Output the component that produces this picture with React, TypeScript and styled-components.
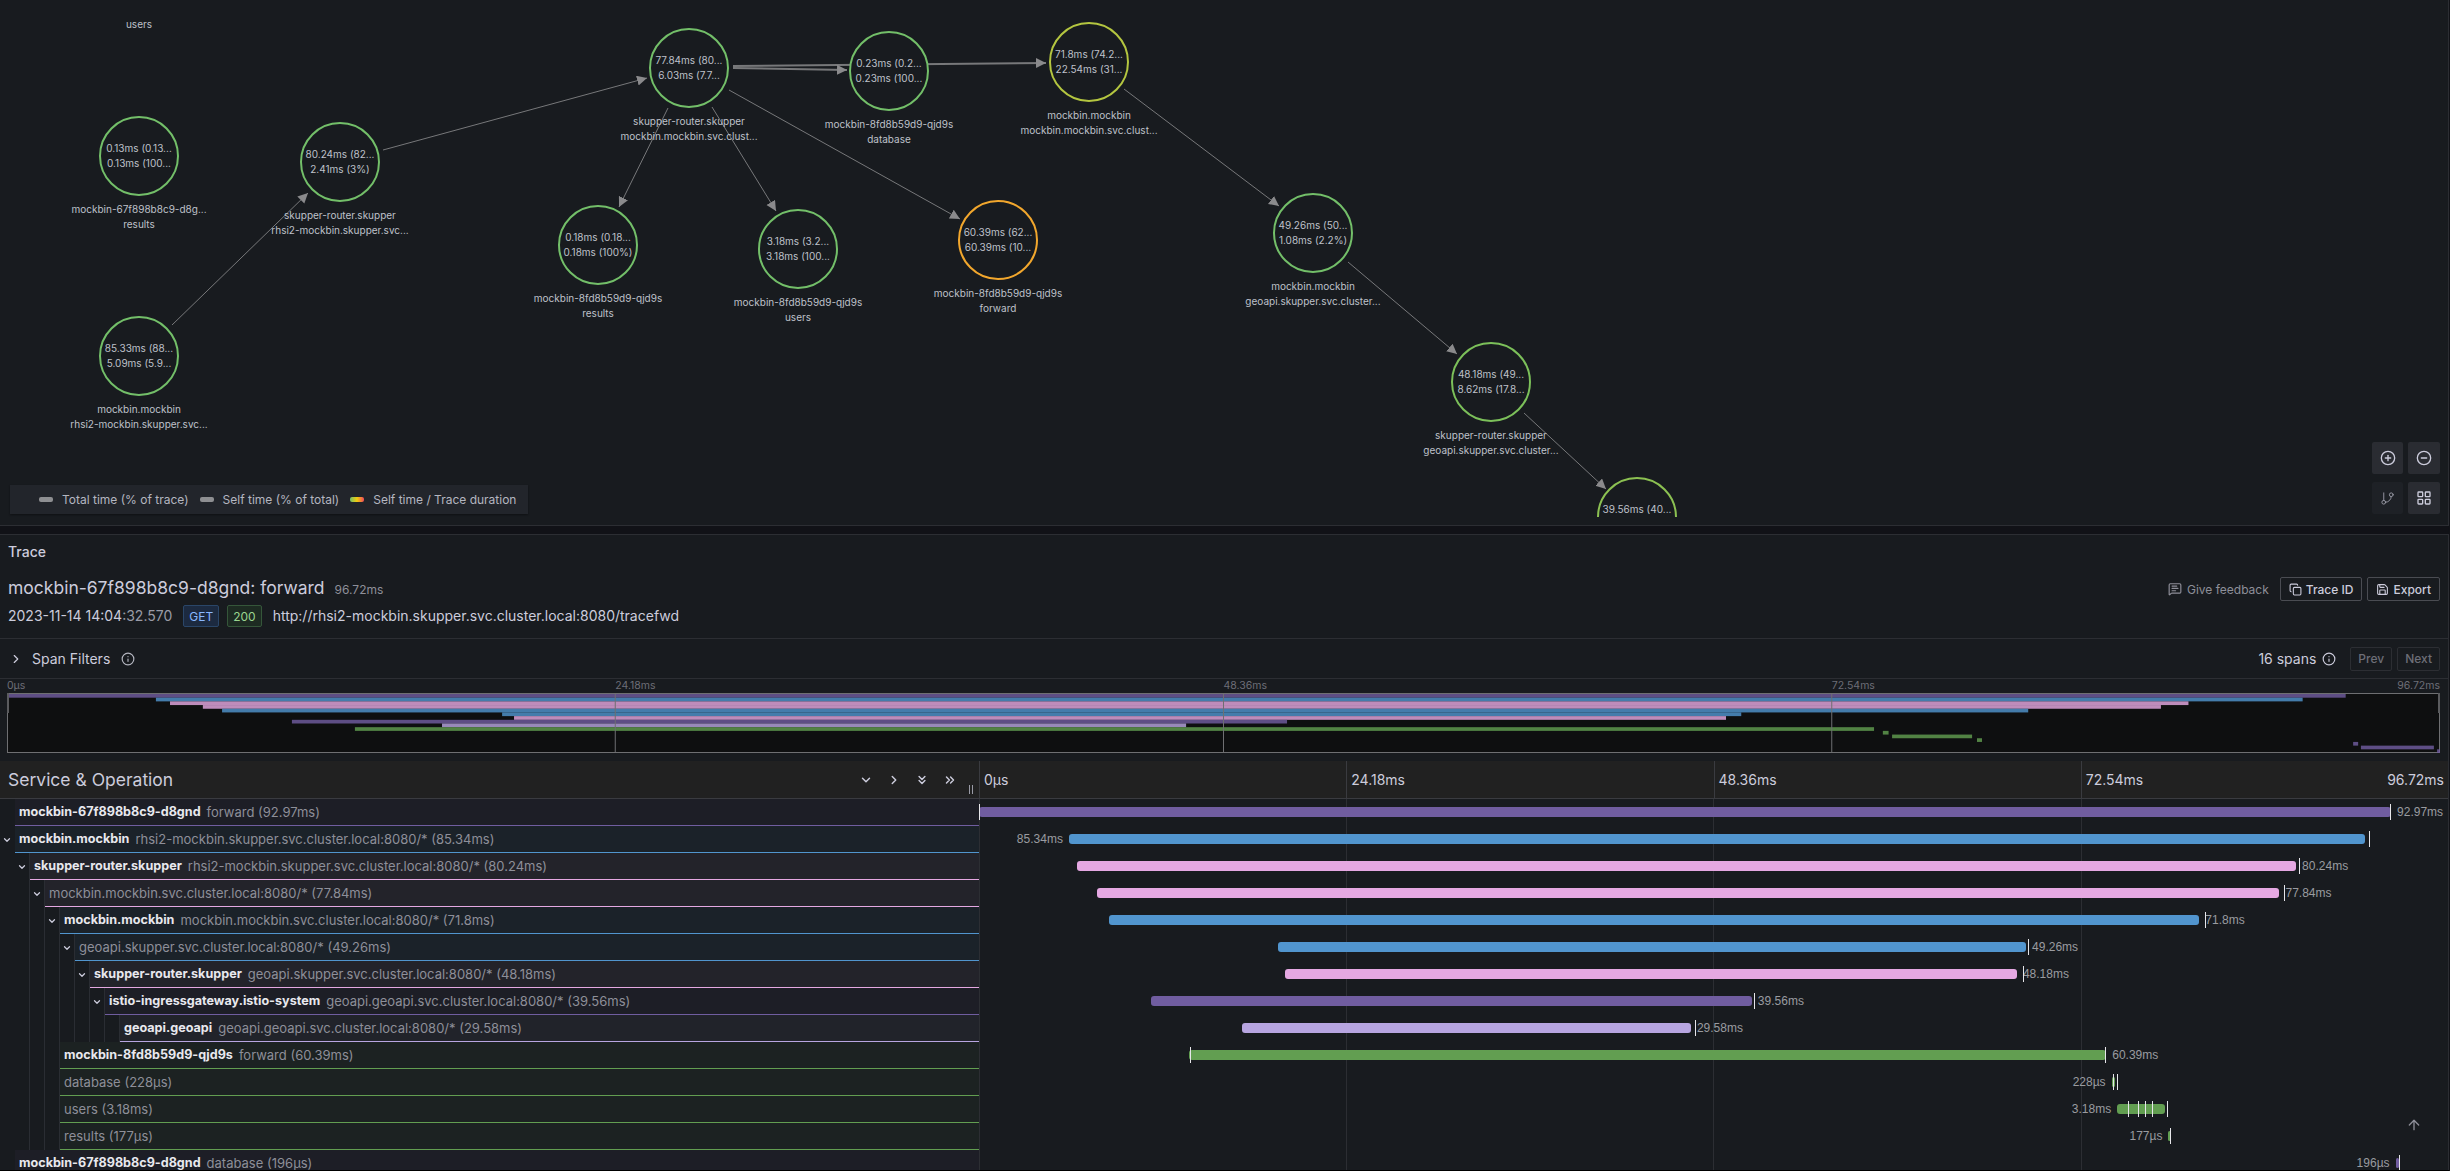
import styled, { createGlobalStyle } from 'styled-components';
import {
  ArrowUp,
  ChevronDown,
  ChevronRight,
  ChevronsDown,
  ChevronsRight,
  CircleMinus,
  CirclePlus,
  Copy,
  GitBranch,
  Info,
  LayoutGrid,
  MessageSquareText,
  Save,
} from 'lucide-react';

const PURPLE = '#705da0';
const BLUE = '#5195ce';
const PINK = '#e5a8e2';
const LILAC = '#b7a5e0';
const GREEN = '#629e51';
const TOTAL_MS = 96.72;

type GraphNode = { cx: number; cy: number; stats: string[]; label: string[]; color?: string };

const nodes: GraphNode[] = [
  { cx: 139, cy: -59, stats: [], label: ['geoapi.mockbin.svc.clust...', '\u00a0', 'users'] },
  { cx: 139, cy: 156, stats: ['0.13ms (0.13...', '0.13ms (100...'], label: ['mockbin-67f898b8c9-d8g...', 'results'] },
  { cx: 139, cy: 356, stats: ['85.33ms (88...', '5.09ms (5.9...'], label: ['mockbin.mockbin', 'rhsi2-mockbin.skupper.svc...'] },
  { cx: 340, cy: 162, stats: ['80.24ms (82...', '2.41ms (3%)'], label: ['skupper-router.skupper', 'rhsi2-mockbin.skupper.svc...'] },
  { cx: 689, cy: 68, stats: ['77.84ms (80...', '6.03ms (7.7...'], label: ['skupper-router.skupper', 'mockbin.mockbin.svc.clust...'] },
  { cx: 598, cy: 245, stats: ['0.18ms (0.18...', '0.18ms (100%)'], label: ['mockbin-8fd8b59d9-qjd9s', 'results'] },
  { cx: 798, cy: 249, stats: ['3.18ms (3.2...', '3.18ms (100...'], label: ['mockbin-8fd8b59d9-qjd9s', 'users'] },
  { cx: 889, cy: 71, stats: ['0.23ms (0.2...', '0.23ms (100...'], label: ['mockbin-8fd8b59d9-qjd9s', 'database'] },
  { cx: 1089, cy: 62, stats: ['71.8ms (74.2...', '22.54ms (31...'], label: ['mockbin.mockbin', 'mockbin.mockbin.svc.clust...'], color: '#b4c640' },
  { cx: 998, cy: 240, stats: ['60.39ms (62...', '60.39ms (10...'], label: ['mockbin-8fd8b59d9-qjd9s', 'forward'], color: '#f2a72d' },
  { cx: 1313, cy: 233, stats: ['49.26ms (50...', '1.08ms (2.2%)'], label: ['mockbin.mockbin', 'geoapi.skupper.svc.cluster...'] },
  { cx: 1491, cy: 382, stats: ['48.18ms (49...', '8.62ms (17.8...'], label: ['skupper-router.skupper', 'geoapi.skupper.svc.cluster...'], color: '#7cc05a' },
  { cx: 1637, cy: 517, stats: ['39.56ms (40...', '9.98ms (25.2...'], label: ['istio-ingressgateway.istio...', 'geoapi.geoapi.svc.cluster...'], color: '#8cc152' },
];

const edges = [
  { d: [172, 325, 308, 193], w: 1 },
  { d: [383, 150, 647, 78], w: 1 },
  { d: [668, 108, 619, 207], w: 1 },
  { d: [712, 107, 776, 211], w: 1 },
  { d: [729, 90, 960, 219], w: 1 },
  { d: [733, 66, 1046, 63], w: 2 },
  { d: [733, 68, 847, 70], w: 2 },
  { d: [1124, 89, 1279, 206], w: 1 },
  { d: [1348, 262, 1457, 354], w: 1 },
  { d: [1524, 413, 1606, 489], w: 1 },
];

type Span = {
  service?: string;
  op: string;
  dur: string;
  ms: number;
  start: number;
  color: string;
  depth: number;
  parent?: boolean;
  side: 'left' | 'right';
  marks: number[];
};

const spans: Span[] = [
  { service: 'mockbin-67f898b8c9-d8gnd', op: 'forward', dur: '92.97ms', ms: 92.97, start: 0, color: PURPLE, depth: 1, side: 'right', marks: [0, 1411] },
  { service: 'mockbin.mockbin', op: 'rhsi2-mockbin.skupper.svc.cluster.local:8080/*', dur: '85.34ms', ms: 85.34, start: 6.12, color: BLUE, depth: 1, parent: true, side: 'left', marks: [1390] },
  { service: 'skupper-router.skupper', op: 'rhsi2-mockbin.skupper.svc.cluster.local:8080/*', dur: '80.24ms', ms: 80.24, start: 6.7, color: PINK, depth: 2, parent: true, side: 'right', marks: [1320] },
  { op: 'mockbin.mockbin.svc.cluster.local:8080/*', dur: '77.84ms', ms: 77.84, start: 8.05, color: PINK, depth: 3, parent: true, side: 'right', marks: [1304.5] },
  { service: 'mockbin.mockbin', op: 'mockbin.mockbin.svc.cluster.local:8080/*', dur: '71.8ms', ms: 71.8, start: 8.84, color: BLUE, depth: 4, parent: true, side: 'right', marks: [1225.5] },
  { op: 'geoapi.skupper.svc.cluster.local:8080/*', dur: '49.26ms', ms: 49.26, start: 20.35, color: BLUE, depth: 5, parent: true, side: 'right', marks: [1049] },
  { service: 'skupper-router.skupper', op: 'geoapi.skupper.svc.cluster.local:8080/*', dur: '48.18ms', ms: 48.18, start: 20.84, color: PINK, depth: 6, parent: true, side: 'right', marks: [1043.5] },
  { service: 'istio-ingressgateway.istio-system', op: 'geoapi.geoapi.svc.cluster.local:8080/*', dur: '39.56ms', ms: 39.56, start: 11.71, color: PURPLE, depth: 7, parent: true, side: 'right', marks: [775] },
  { service: 'geoapi.geoapi', op: 'geoapi.geoapi.svc.cluster.local:8080/*', dur: '29.58ms', ms: 29.58, start: 17.88, color: LILAC, depth: 8, side: 'right', marks: [716] },
  { service: 'mockbin-8fd8b59d9-qjd9s', op: 'forward', dur: '60.39ms', ms: 60.39, start: 14.3, color: GREEN, depth: 4, side: 'right', marks: [211, 1125.5] },
  { op: 'database', dur: '228µs', ms: 0.228, start: 77.1, color: GREEN, depth: 4, side: 'left', marks: [1134, 1138] },
  { op: 'users', dur: '3.18ms', ms: 3.18, start: 77.48, color: GREEN, depth: 4, side: 'left', marks: [1149.4, 1159, 1166, 1172.6, 1187.7] },
  { op: 'results', dur: '177µs', ms: 0.177, start: 80.97, color: GREEN, depth: 4, side: 'left', marks: [1190.5] },
  { service: 'mockbin-67f898b8c9-d8gnd', op: 'database', dur: '196µs', ms: 0.196, start: 96.43, color: PURPLE, depth: 1, side: 'left', marks: [1419.6] },
  { service: 'mockbin-67f898b8c9-d8gnd', op: 'users', dur: '2.9ms', ms: 2.9, start: 96.75, color: PURPLE, depth: 1, side: 'left', marks: [] },
  { service: 'mockbin-67f898b8c9-d8gnd', op: 'results', dur: '130µs', ms: 0.13, start: 99.88, color: PURPLE, depth: 1, side: 'left', marks: [] },
];

const GlobalStyle = createGlobalStyle`
  html, body {
    margin: 0;
    background: #111217;
    overflow: hidden;
  }
  body {
    font-family: Inter, "Noto Sans", sans-serif;
    color: #ccccdc;
  }
  * {
    box-sizing: border-box;
  }
`;

const Page = styled.div`
  width: 2450px;
  height: 1171px;
  padding-right: 1px;
  overflow: hidden;
  display: flex;
  flex-direction: column;
`;

const GraphPanel = styled.section`
  position: relative;
  flex: none;
  height: 526px;
  background: #181b1f;
  border-right: 1px solid #2c2e33;
  border-bottom: 1px solid #2c2e33;
`;

const GraphCanvas = styled.div`
  position: relative;
  height: 517px;
  overflow: hidden;
`;

const EdgeLayer = styled.svg`
  position: absolute;
  inset: 0;
  width: 100%;
  height: 100%;
`;

const NodeBox = styled.div`
  position: absolute;
  width: 200px;
  display: flex;
  flex-direction: column;
  align-items: center;
  font-size: 10px;
  line-height: 15px;
  color: #bfc1ca;
  white-space: nowrap;
`;

const Ring = styled.div<{ $color: string }>`
  width: 80px;
  height: 80px;
  flex: none;
  display: flex;
  flex-direction: column;
  align-items: center;
  justify-content: center;
  border-radius: 50%;
  border: 2px solid ${(p) => p.$color};
  background: #181b1f;
`;

const NodeLabel = styled.div`
  margin-top: 6px;
  text-align: center;
`;

const Legend = styled.div`
  position: absolute;
  left: 10px;
  top: 485px;
  width: 518px;
  height: 29px;
  padding-left: 29px;
  background: #22252b;
  display: flex;
  align-items: center;
  gap: 11px;
  font-size: 12px;
  color: #b4b6c0;
  box-shadow: 0 1px 2px rgba(0, 0, 0, 0.4);
`;

const LegendItem = styled.span`
  display: flex;
  align-items: center;
  gap: 9px;
  white-space: nowrap;
`;

const Swatch = styled.i<{ $fill: string }>`
  width: 14px;
  height: 5px;
  border-radius: 2px;
  background: ${(p) => p.$fill};
`;

const GraphControls = styled.div`
  position: absolute;
  right: 8px;
  top: 442px;
  display: grid;
  grid-template-columns: 31px 32px;
  grid-auto-rows: 32px;
  gap: 8px 5px;
`;

const ControlButton = styled.button<{ $dim?: boolean }>`
  display: flex;
  align-items: center;
  justify-content: center;
  padding: 0;
  border: 0;
  border-radius: 2px;
  color: ${(p) => (p.$dim ? '#9a9ba6' : '#ccccdc')};
  background: ${(p) => (p.$dim ? '#1e2126' : '#2a2c32')};
`;

const TracePanel = styled.section`
  position: relative;
  flex: none;
  margin-top: 8px;
  height: 636px;
  overflow: hidden;
  background: #181b1f;
  border: 1px solid #2c2e33;
  border-width: 1px 1px 0 0;
`;

const PanelTitle = styled.div`
  height: 32px;
  padding-left: 8px;
  display: flex;
  align-items: center;
  font-size: 14px;
  font-weight: 500;
`;

const TitleRow = styled.div`
  margin-top: 10px;
  height: 24px;
  padding: 0 8px;
  display: flex;
  align-items: center;
`;

const TraceName = styled.h1`
  margin: -2px 0 0;
  font-size: 17.5px;
  font-weight: 400;
  line-height: 24px;
`;

const TraceTotal = styled.span`
  margin-left: 10px;
  font-size: 12px;
  color: #8e8f99;
`;

const HeaderActions = styled.div`
  margin-left: auto;
  display: flex;
  align-items: center;
  gap: 5px;
`;

const Feedback = styled.span`
  display: flex;
  align-items: center;
  gap: 5px;
  margin-right: 6px;
  font-size: 12px;
  color: #8e8f99;
`;

const OutlineButton = styled.button`
  height: 24px;
  padding: 0 8px;
  display: flex;
  align-items: center;
  gap: 4px;
  font: 500 12px Inter, sans-serif;
  color: #ccccdc;
  background: transparent;
  border: 1px solid #4a4c52;
  border-radius: 2px;
`;

const MetaRow = styled.div`
  margin-top: 4px;
  height: 22px;
  margin-bottom: 11px;
  padding: 0 8px;
  display: flex;
  align-items: center;
  font-size: 14px;
`;

const Timestamp = styled.span`
  margin-top: -1px;
  margin-right: 11px;
  color: #ccccdc;
`;

const Faint = styled.span`
  color: #9a9ba6;
`;

const Tag = styled.span<{ $text: string; $bg: string; $line: string }>`
  height: 22px;
  padding: 0 5px;
  margin-right: 8px;
  display: flex;
  align-items: center;
  font-size: 12px;
  color: ${(p) => p.$text};
  background: ${(p) => p.$bg};
  border: 1px solid ${(p) => p.$line};
  border-radius: 2px;
`;

const TraceUrl = styled.span`
  margin: -1px 0 0 3px;
  font-size: 14px;
`;

const FilterRow = styled.div`
  height: 41px;
  padding: 0 8px;
  border-top: 1px solid #2c2e33;
  border-bottom: 1px solid #2c2e33;
  display: flex;
  align-items: center;
  font-size: 14px;
`;

const FilterToggle = styled(ChevronRight)`
  margin: 0 9px 0 1px;
`;

const FilterInfo = styled(Info)`
  margin-left: 11px;
  color: #b4b6c0;
`;

const SpanCount = styled.span`
  margin-left: auto;
  display: flex;
  align-items: center;
  gap: 6px;
`;

const PagerButton = styled.button`
  height: 24px;
  padding: 0 7px;
  margin-left: 5px;
  font: 500 12px Inter, sans-serif;
  color: #6d6e77;
  background: transparent;
  border: 1px solid #2c2e33;
  border-radius: 2px;
`;

const SpanPager = styled.div`
  display: flex;
  margin-left: 9px;
`;

const Minimap = styled.div`
  height: 82px;
  padding: 0 8px 8px 7px;
`;

const MinimapTicks = styled.div`
  height: 14px;
  display: grid;
  grid-template-columns: repeat(4, 1fr);
  font-size: 10.5px;
  line-height: 14px;
  color: #6d6e77;
`;

const TickPair = styled.div`
  display: flex;
  justify-content: space-between;
`;

const MinimapChart = styled.svg`
  display: block;
  width: 100%;
  height: 60px;
`;

const Timeline = styled.div`
  position: relative;
`;

const TimelineHeader = styled.div`
  height: 38px;
  display: flex;
  background: #212121;
  border-bottom: 1px solid #3a3b40;
`;

const OperationHeader = styled.div`
  position: relative;
  flex: none;
  width: 979px;
  height: 100%;
  padding-left: 8px;
  display: flex;
  align-items: center;
`;

const OperationTitle = styled.h2`
  margin: 0;
  font-size: 17.5px;
  font-weight: 400;
`;

const ExpandIcons = styled.div`
  margin-left: auto;
  margin-right: 22px;
  display: flex;
  gap: 14px;
`;

const Resizer = styled.i`
  position: absolute;
  right: 6px;
  top: 24px;
  width: 4px;
  height: 9px;
  border-left: 1px solid #9a9ba6;
  border-right: 1px solid #9a9ba6;
`;

const TicksHeader = styled.div`
  flex: 1;
  display: grid;
  grid-template-columns: repeat(4, 1fr);
`;

const HeaderTick = styled.div`
  padding: 0 4px;
  border-left: 1px solid #3a3b40;
  font-size: 14px;
  line-height: 38px;
`;

const HeaderTickPair = styled(HeaderTick)`
  display: flex;
  justify-content: space-between;
`;

const Row = styled.div`
  display: flex;
  height: 27px;
`;

const NameCell = styled.div`
  flex: none;
  width: 979px;
  display: flex;
`;

const Guide = styled.span<{ $line: boolean }>`
  flex: none;
  width: 15px;
  display: flex;
  align-items: center;
  justify-content: center;
  color: #ccccdc;
  border-right: 1px solid ${(p) => (p.$line ? '#2a2d33' : 'transparent')};
`;

const NameContent = styled.div<{ $color: string }>`
  flex: 1;
  min-width: 0;
  padding: 0 0 1px 4px;
  display: flex;
  align-items: center;
  gap: 6px;
  white-space: nowrap;
  font-size: 13px;
  background: ${(p) => p.$color}0f;
  border-bottom: 1px solid ${(p) => p.$color};
`;

const ServiceName = styled.strong`
  font-size: 12.6px;
  font-weight: 700;
  color: #e8e8ee;
`;

const OperationName = styled.span`
  color: #8e8f99;
`;

const BarCell = styled.div`
  position: relative;
  flex: 1;
  background-image: repeating-linear-gradient(to right, #2c2e33 0 1px, transparent 1px 25%);
`;

const Bar = styled.div<{ $color: string }>`
  position: absolute;
  top: 8px;
  height: 10px;
  border-radius: 3px;
  background: ${(p) => p.$color};
`;

const BarLabel = styled.span<{ $side: 'left' | 'right' }>`
  position: absolute;
  top: -3px;
  ${(p) => (p.$side === 'right' ? 'left: 100%; margin-left: 6px;' : 'right: 100%; margin-right: 6px;')}
  font: 12px/16px "Liberation Sans", Arial, sans-serif;
  color: #9a9ba0;
  white-space: nowrap;
`;

const LogMark = styled.i`
  position: absolute;
  top: 5px;
  width: 1px;
  height: 16px;
  background: #e6e6ea;
`;

const ScrollTop = styled(ArrowUp)`
  position: absolute;
  right: 26px;
  top: 582px;
  color: #8e8f99;
`;

const BottomEdge = styled.div`
  flex: none;
  height: 1px;
  background: #000;
`;

function NodeItem({ node }: { node: GraphNode }) {
  return (
    <NodeBox style={{ left: node.cx - 100, top: node.cy - 40 }}>
      <Ring $color={node.color ?? '#73bf69'}>
        {node.stats.map((line) => (
          <span key={line}>{line}</span>
        ))}
      </Ring>
      <NodeLabel>
        {node.label.map((line) => (
          <div key={line}>{line}</div>
        ))}
      </NodeLabel>
    </NodeBox>
  );
}

function ServiceGraph() {
  return (
    <GraphPanel>
      <GraphCanvas>
        <EdgeLayer>
          <defs>
            <marker id="arrow" markerUnits="userSpaceOnUse" markerWidth="11" markerHeight="11" refX="10" refY="5" orient="auto">
              <path d="M0 0 L10 5 L0 10 Z" fill="#8a8a8c" />
            </marker>
          </defs>
          {edges.map(({ d, w }) => (
            <line
              key={d.join()}
              x1={d[0]}
              y1={d[1]}
              x2={d[2]}
              y2={d[3]}
              stroke="#77787a"
              strokeWidth={w}
              markerEnd="url(#arrow)"
            />
          ))}
        </EdgeLayer>
        {nodes.map((node) => (
          <NodeItem key={node.cx + '-' + node.cy} node={node} />
        ))}
      </GraphCanvas>
      <Legend>
        <LegendItem>
          <Swatch $fill="#8e8f92" />
          Total time (% of trace)
        </LegendItem>
        <LegendItem>
          <Swatch $fill="#8e8f92" />
          Self time (% of total)
        </LegendItem>
        <LegendItem>
          <Swatch $fill="linear-gradient(to right, #73bf69, #f2cc0c, #f2495c)" />
          Self time / Trace duration
        </LegendItem>
      </Legend>
      <GraphControls>
        <ControlButton>
          <CirclePlus size={16} />
        </ControlButton>
        <ControlButton>
          <CircleMinus size={16} />
        </ControlButton>
        <ControlButton $dim>
          <GitBranch size={15} strokeWidth={1.5} />
        </ControlButton>
        <ControlButton>
          <LayoutGrid size={16} />
        </ControlButton>
      </GraphControls>
    </GraphPanel>
  );
}

function TraceHeader() {
  return (
    <>
      <PanelTitle>Trace</PanelTitle>
      <TitleRow>
        <TraceName>mockbin-67f898b8c9-d8gnd: forward</TraceName>
        <TraceTotal>96.72ms</TraceTotal>
        <HeaderActions>
          <Feedback>
            <MessageSquareText size={14} />
            Give feedback
          </Feedback>
          <OutlineButton>
            <Copy size={13} />
            Trace ID
          </OutlineButton>
          <OutlineButton>
            <Save size={13} />
            Export
          </OutlineButton>
        </HeaderActions>
      </TitleRow>
      <MetaRow>
        <Timestamp>
          2023-11-14 14:04<Faint>:32.570</Faint>
        </Timestamp>
        <Tag $text="#8ab8ff" $bg="#1c2a40" $line="#2a4668">GET</Tag>
        <Tag $text="#9ad58f" $bg="#1d2b22" $line="#35563a">200</Tag>
        <TraceUrl>http://rhsi2-mockbin.skupper.svc.cluster.local:8080/tracefwd</TraceUrl>
      </MetaRow>
      <FilterRow>
        <FilterToggle size={14} />
        Span Filters
        <FilterInfo size={14} />
        <SpanCount>
          16 spans
          <Info size={14} />
        </SpanCount>
        <SpanPager>
          <PagerButton>Prev</PagerButton>
          <PagerButton>Next</PagerButton>
        </SpanPager>
      </FilterRow>
    </>
  );
}

function MinimapView() {
  const width = 2433;
  const rowHeight = 59 / spans.length;
  return (
    <Minimap>
      <MinimapTicks>
        <span>0µs</span>
        <span>24.18ms</span>
        <span>48.36ms</span>
        <TickPair>
          <span>72.54ms</span>
          <span>96.72ms</span>
        </TickPair>
      </MinimapTicks>
      <MinimapChart viewBox={`0 0 ${width} 60`} preserveAspectRatio="none">
        <rect x="0.5" y="0.5" width={width - 1} height="59" fill="#0e0f10" stroke="#6e6f72" />
        {spans.map((span, i) => (
          <rect
            key={i}
            x={(span.start / 100) * width}
            y={1 + i * rowHeight}
            width={Math.max((span.ms / TOTAL_MS) * width, 5)}
            height={rowHeight}
            fill={span.color}
            fillOpacity={0.82}
          />
        ))}
        {[0.25, 0.5, 0.75].map((at) => (
          <line key={at} x1={at * width} x2={at * width} y1="1" y2="59" stroke="#6e6f72" />
        ))}
        <rect x="0" y="0" width="2" height="20" fill="#5a5b5e" />
        <rect x={width - 2} y="0" width="2" height="20" fill="#5a5b5e" />
      </MinimapChart>
    </Minimap>
  );
}

function SpanRow({ span }: { span: Span }) {
  return (
    <Row>
      <NameCell>
        {Array.from({ length: span.depth }, (_, i) => (
          <Guide key={i} $line={i > 0}>
            {span.parent && i === span.depth - 1 && <ChevronDown size={10} strokeWidth={3} />}
          </Guide>
        ))}
        <NameContent $color={span.color}>
          {span.service && <ServiceName>{span.service}</ServiceName>}
          <OperationName>
            {span.op} ({span.dur})
          </OperationName>
        </NameContent>
      </NameCell>
      <BarCell>
        <Bar
          $color={span.color}
          style={{ left: `${span.start}%`, width: `${Math.max((span.ms / TOTAL_MS) * 100, 0.2)}%` }}
        >
          <BarLabel $side={span.side}>{span.dur}</BarLabel>
        </Bar>
        {span.marks.map((at) => (
          <LogMark key={at} style={{ left: at }} />
        ))}
      </BarCell>
    </Row>
  );
}

function TraceTimeline() {
  return (
    <Timeline>
      <TimelineHeader>
        <OperationHeader>
          <OperationTitle>Service &amp; Operation</OperationTitle>
          <ExpandIcons>
            <ChevronDown size={14} strokeWidth={2.5} />
            <ChevronRight size={14} strokeWidth={2.5} />
            <ChevronsDown size={14} strokeWidth={2.5} />
            <ChevronsRight size={14} strokeWidth={2.5} />
          </ExpandIcons>
          <Resizer />
        </OperationHeader>
        <TicksHeader>
          <HeaderTick>0µs</HeaderTick>
          <HeaderTick>24.18ms</HeaderTick>
          <HeaderTick>48.36ms</HeaderTick>
          <HeaderTickPair>
            <span>72.54ms</span>
            <span>96.72ms</span>
          </HeaderTickPair>
        </TicksHeader>
      </TimelineHeader>
      {spans.map((span, i) => (
        <SpanRow key={i} span={span} />
      ))}
    </Timeline>
  );
}

export default function App() {
  return (
    <Page>
      <GlobalStyle />
      <ServiceGraph />
      <TracePanel>
        <TraceHeader />
        <MinimapView />
        <TraceTimeline />
        <ScrollTop size={16} />
      </TracePanel>
      <BottomEdge />
    </Page>
  );
}
